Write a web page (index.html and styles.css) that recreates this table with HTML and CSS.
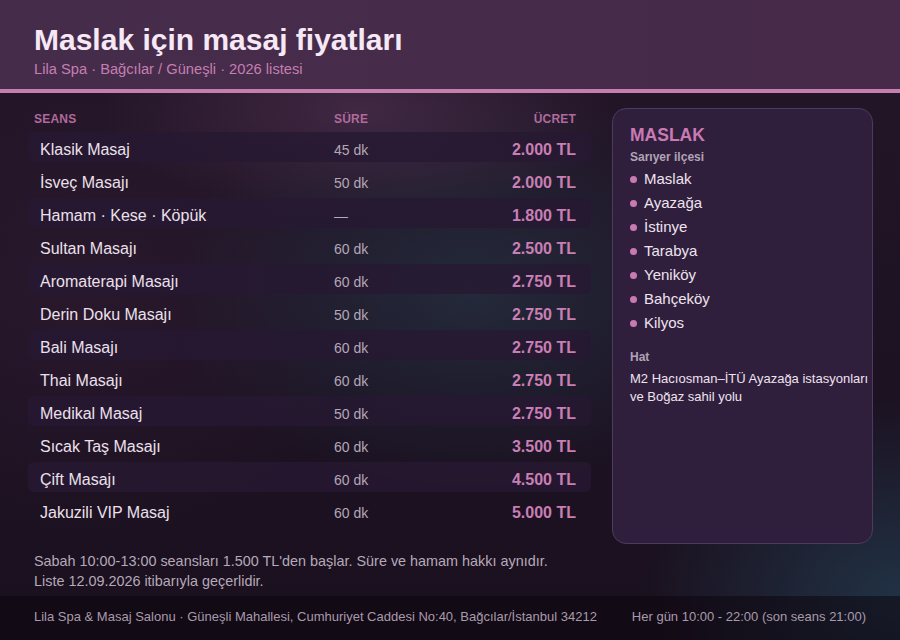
FILE: index.html
```html
<!DOCTYPE html>
<html lang="tr">
<head>
<meta charset="utf-8">
<title>Maslak için masaj fiyatları</title>
<link rel="stylesheet" href="styles.css">
</head>
<body>
<div class="page">
  <header class="top">
    <h1 class="title">Maslak için masaj fiyatları</h1>
    <p class="subtitle">Lila Spa · Bağcılar / Güneşli · 2026 listesi</p>
  </header>
  <div class="accent"></div>
  <main class="main">
    <section class="prices">
      <div class="thead">
        <span>SEANS</span><span>SÜRE</span><span class="r">ÜCRET</span>
      </div>
      <div class="row band"><span class="name">Klasik Masaj</span><span class="dur">45 dk</span><span class="price">2.000 TL</span></div>
      <div class="row"><span class="name">İsveç Masajı</span><span class="dur">50 dk</span><span class="price">2.000 TL</span></div>
      <div class="row band"><span class="name">Hamam · Kese · Köpük</span><span class="dur">—</span><span class="price">1.800 TL</span></div>
      <div class="row"><span class="name">Sultan Masajı</span><span class="dur">60 dk</span><span class="price">2.500 TL</span></div>
      <div class="row band"><span class="name">Aromaterapi Masajı</span><span class="dur">60 dk</span><span class="price">2.750 TL</span></div>
      <div class="row"><span class="name">Derin Doku Masajı</span><span class="dur">50 dk</span><span class="price">2.750 TL</span></div>
      <div class="row band"><span class="name">Bali Masajı</span><span class="dur">60 dk</span><span class="price">2.750 TL</span></div>
      <div class="row"><span class="name">Thai Masajı</span><span class="dur">60 dk</span><span class="price">2.750 TL</span></div>
      <div class="row band"><span class="name">Medikal Masaj</span><span class="dur">50 dk</span><span class="price">2.750 TL</span></div>
      <div class="row"><span class="name">Sıcak Taş Masajı</span><span class="dur">60 dk</span><span class="price">3.500 TL</span></div>
      <div class="row band"><span class="name">Çift Masajı</span><span class="dur">60 dk</span><span class="price">4.500 TL</span></div>
      <div class="row"><span class="name">Jakuzili VIP Masaj</span><span class="dur">60 dk</span><span class="price">5.000 TL</span></div>
      <div class="notes">
        <p>Sabah 10:00-13:00 seansları 1.500 TL'den başlar. Süre ve hamam hakkı aynıdır.</p>
        <p>Liste 12.09.2026 itibarıyla geçerlidir.</p>
      </div>
    </section>
    <aside class="card">
      <h2 class="card-title">MASLAK</h2>
      <p class="label">Sarıyer ilçesi</p>
      <ul class="areas">
        <li>Maslak</li>
        <li>Ayazağa</li>
        <li>İstinye</li>
        <li>Tarabya</li>
        <li>Yeniköy</li>
        <li>Bahçeköy</li>
        <li>Kilyos</li>
      </ul>
      <p class="label hat">Hat</p>
      <p class="line">M2 Hacıosman–İTÜ Ayazağa istasyonları ve Boğaz sahil yolu</p>
    </aside>
  </main>
  <footer class="foot">
    <span>Lila Spa &amp; Masaj Salonu · Güneşli Mahallesi, Cumhuriyet Caddesi No:40, Bağcılar/İstanbul 34212</span>
    <span>Her gün 10:00 - 22:00 (son seans 21:00)</span>
  </footer>
</div>
</body>
</html>
```
FILE: styles.css
```css
* { box-sizing: border-box; }
html, body { margin: 0; padding: 0; }
body {
  width: 900px;
  height: 640px;
  overflow: hidden;
  font-family: "Liberation Sans", Arial, sans-serif;
  background: #1a1020;
}
.page {
  width: 900px;
  height: 640px;
  display: flex;
  flex-direction: column;
  background:
    radial-gradient(ellipse 260px 110px at 360px 110px, rgba(90, 55, 90, 0.55), rgba(90, 55, 90, 0) 100%),
    radial-gradient(ellipse 300px 200px at 470px 290px, rgba(40, 60, 78, 0.55), rgba(40, 60, 78, 0) 100%),
    radial-gradient(ellipse 260px 200px at 900px 600px, rgba(35, 65, 85, 0.7), rgba(35, 65, 85, 0) 100%),
    radial-gradient(ellipse 300px 260px at 80px 300px, rgba(55, 30, 55, 0.45), rgba(55, 30, 55, 0) 100%),
    linear-gradient(180deg, #241628 0%, #1c1222 60%, #1a101e 100%);
}
.top {
  height: 89px;
  padding: 22px 34px 0;
  background: linear-gradient(90deg, #462c4b 0%, #472a4a 100%);
}
.title {
  margin: 0;
  font-size: 30px;
  line-height: 36px;
  font-weight: 700;
  color: #f7e8f6;
}
.subtitle {
  margin: 1px 0 0;
  font-size: 14.7px;
  line-height: 20px;
  color: #c47fb1;
}
.accent {
  height: 4px;
  background: #c47fae;
}
.main {
  flex: 1;
  display: flex;
  gap: 21px;
  padding: 15px 27px 0 28px;
}
.prices {
  width: 563px;
}
.thead {
  display: grid;
  grid-template-columns: 300px 1fr auto;
  height: 22px;
  margin-bottom: 2px;
  padding: 0 15px 0 6px;
  font-size: 12px;
  line-height: 22px;
  font-weight: 700;
  letter-spacing: 0.2px;
  color: #b06a9d;
}
.thead .r { text-align: right; }
.row {
  display: grid;
  grid-template-columns: 294px 1fr auto;
  align-items: center;
  height: 30px;
  margin-bottom: 3px;
  padding: 5px 15px 0 12px;
  border-radius: 6px;
}
.row.band {
  background: rgba(38, 24, 50, 0.78);
}
.name {
  font-size: 16px;
  color: #ece0ec;
}
.dur {
  font-size: 14px;
  color: #b4a7b8;
}
.price {
  font-size: 16px;
  font-weight: 700;
  color: #c97fb4;
  text-align: right;
}
.notes {
  margin-top: 27px;
  padding-left: 6px;
}
.notes p {
  margin: 0;
  font-size: 14.4px;
  line-height: 19.5px;
  color: #b6a9b9;
}
.card {
  width: 261px;
  height: 436px;
  padding: 16px 0 0 17px;
  background: #2f1f3d;
  border: 1px solid #4c3b5e;
  border-radius: 14px;
}
.card-title {
  margin: 0;
  font-size: 17.5px;
  line-height: 21px;
  font-weight: 700;
  color: #c97ab2;
}
.label {
  margin: 3px 0 0;
  font-size: 12px;
  line-height: 16px;
  font-weight: 700;
  color: #b2a3b6;
}
.areas {
  list-style: none;
  margin: 1px 0 0;
  padding: 0;
}
.areas li {
  display: flex;
  align-items: center;
  gap: 7px;
  height: 24px;
  font-size: 15px;
  color: #efe3ef;
}
.areas li::before {
  content: "";
  width: 7px;
  height: 7px;
  border-radius: 50%;
  background: #c97ab2;
  margin-top: 2px;
}
.label.hat {
  margin-top: 15px;
}
.line {
  margin: 5px -4px 0 0;
  font-size: 13px;
  line-height: 18.2px;
  color: #efe3ef;
}
.foot {
  height: 44px;
  display: flex;
  justify-content: space-between;
  align-items: center;
  padding: 0 34px 3px;
  background: rgba(12, 6, 14, 0.55);
  font-size: 13px;
  color: #a99aab;
}
```
